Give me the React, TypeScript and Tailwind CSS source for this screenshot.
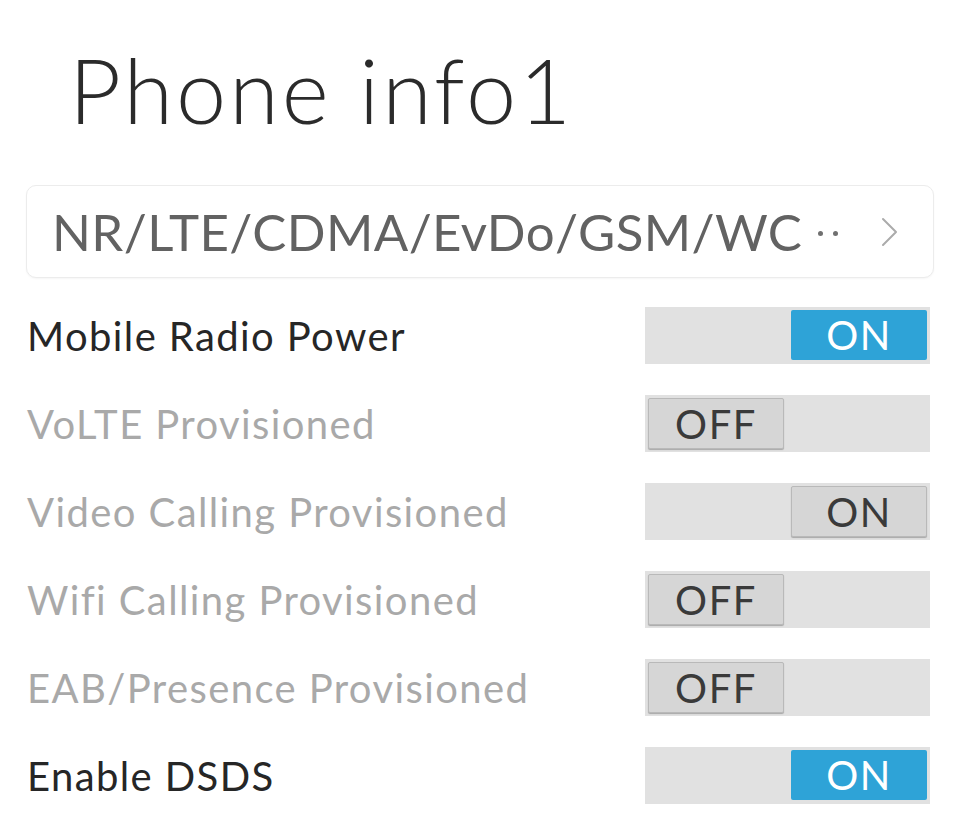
import React from "react";

type Row = { label: string; on: boolean; enabled: boolean; active: boolean };

const rows: Row[] = [
  { label: "Mobile Radio Power", on: true, enabled: true, active: true },
  { label: "VoLTE Provisioned", on: false, enabled: false, active: false },
  { label: "Video Calling Provisioned", on: true, enabled: false, active: false },
  { label: "Wifi Calling Provisioned", on: false, enabled: false, active: false },
  { label: "EAB/Presence Provisioned", on: false, enabled: false, active: false },
  { label: "Enable DSDS", on: true, enabled: true, active: true },
];

function Toggle({ on, active }: { on: boolean; active: boolean }) {
  return (
    <div
      className={`flex h-[57px] w-[285px] bg-[#e1e1e1] px-[3px] py-[3px] ${
        on ? "justify-end" : "justify-start"
      }`}
    >
      {on && active ? (
        <div className="flex h-[50px] w-[136px] items-center justify-center rounded-[2px] bg-[#2ea3d7] text-[40px] leading-none tracking-[1.5px] text-white">
          ON
        </div>
      ) : (
        <div className="flex h-[51px] w-[136px] items-center justify-center rounded-[2px] border border-[#b9b9b9] bg-[#d6d6d6] text-[40px] leading-none tracking-[1.5px] text-[#3a3a3a] shadow-[0_1px_1px_rgba(0,0,0,0.25)]">
          {on ? "ON" : "OFF"}
        </div>
      )}
    </div>
  );
}

export default function App() {
  return (
    <div
      className="h-[828px] w-[960px] overflow-hidden bg-white"
      style={{ fontFamily: "Lato, 'Noto Sans', sans-serif" }}
    >
      <div className="h-[185px] pl-[69px] pt-[44px]">
        <h1 className="text-[90px] font-light leading-none tracking-[3px] text-[#2b2b2b]">Phone info1</h1>
      </div>
      <div className="mx-[26px] flex h-[93px] items-center rounded-[10px] border border-[#ececec] bg-white pl-[25px] pr-[34px] shadow-[0_1px_2px_rgba(0,0,0,0.04)]">
        <span className="text-[51px] leading-none tracking-[0.4px] text-[#626262]">NR/LTE/CDMA/EvDo/GSM/WC</span>
        <span className="ml-[16px] mt-[4px] flex gap-[10px]">
          <span className="h-[5px] w-[5px] rounded-full bg-[#707070]" />
          <span className="h-[5px] w-[5px] rounded-full bg-[#707070]" />
        </span>
        <div className="flex-1" />
        <svg width="18" height="30" viewBox="0 0 18 30" fill="none">
          <path d="M2 2 L15 15 L2 28" stroke="#ababab" strokeWidth="2" strokeLinejoin="round" strokeLinecap="round" />
        </svg>
      </div>
      <div className="mt-[29px] flex flex-col gap-[31px] pl-[27px] pr-[30px]">
        {rows.map((r) => (
          <div key={r.label} className="flex h-[57px] items-center justify-between">
            <span
              className={`text-[40px] leading-none tracking-[1.4px] ${r.enabled ? "text-[#262626]" : "text-[#a9a9a9]"}`}
            >
              {r.label}
            </span>
            <Toggle on={r.on} active={r.active} />
          </div>
        ))}
      </div>
    </div>
  );
}
